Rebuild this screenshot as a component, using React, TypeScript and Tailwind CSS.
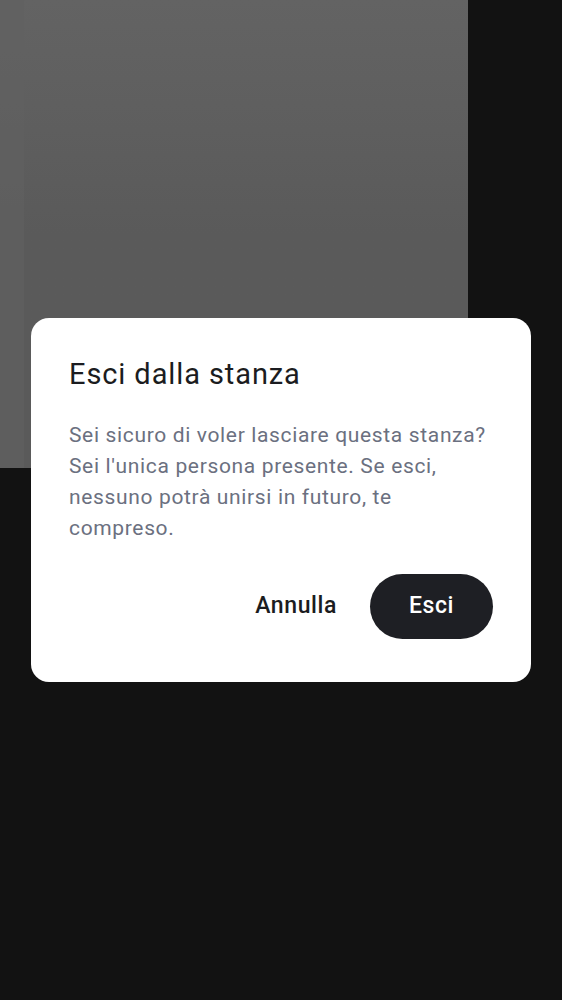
export default function App() {
  return (
    <div
      className="relative h-[1000px] w-full overflow-hidden bg-[#121212]"
      style={{ fontFamily: "Roboto, 'Noto Sans', sans-serif" }}
    >
      <div className="h-[468px] w-[468px] bg-gradient-to-b from-[#636363] via-[#5a5a5a] to-[#5a5a5a]">
        <div className="h-full w-6 bg-[#606060]/60" />
      </div>

      <div className="absolute inset-0 flex items-center justify-center px-[31px]">
        <div className="w-full rounded-[18px] bg-white px-[38px] pb-[43px] pt-[38px]">
          <h2 className="text-[29px] leading-[36px] font-normal tracking-[0.9px] text-[#1b1c20]">
            Esci dalla stanza
          </h2>
          <p className="mt-[28px] text-[21px] leading-[31px] tracking-[0.65px] text-[#6b7080]">
            Sei sicuro di voler lasciare questa stanza? Sei l'unica persona presente. Se esci, nessuno potrà unirsi in futuro, te compreso.
          </p>
          <div className="mt-[30px] flex items-center justify-end gap-[33px]">
            <button className="text-[23px] font-medium tracking-[0.6px] text-[#1b1c20]">Annulla</button>
            <button className="flex h-[65px] w-[123px] items-center justify-center rounded-full bg-[#1e1f24] text-[23px] font-medium tracking-[0.6px] text-white">
              Esci
            </button>
          </div>
        </div>
      </div>
    </div>
  );
}
